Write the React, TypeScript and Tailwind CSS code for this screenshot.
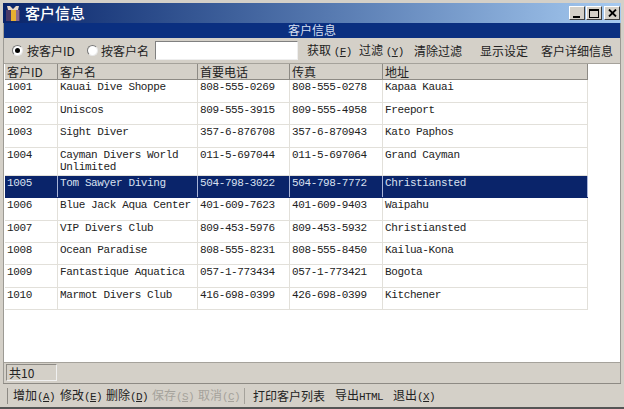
import React from 'react';

const columns = [
    { label: '客户ID', width: 'w-[53px]' },
    { label: '客户名', width: 'w-[140px]' },
    { label: '首要电话', width: 'w-[92px]' },
    { label: '传真', width: 'w-[93px]' },
    { label: '地址', width: 'w-[205px]' },
];

const customers = [
    { id: '1001', name: 'Kauai Dive Shoppe', phone: '808-555-0269', fax: '808-555-0278', addr: 'Kapaa Kauai', h: 'h-[23px]' },
    { id: '1002', name: 'Uniscos', phone: '809-555-3915', fax: '809-555-4958', addr: 'Freeport', h: 'h-[22px]' },
    { id: '1003', name: 'Sight Diver', phone: '357-6-876708', fax: '357-6-870943', addr: 'Kato Paphos', h: 'h-[23px]' },
    { id: '1004', name: 'Cayman Divers World Unlimited', phone: '011-5-697044', fax: '011-5-697064', addr: 'Grand Cayman', h: 'h-[28px]' },
    { id: '1005', name: 'Tom Sawyer Diving', phone: '504-798-3022', fax: '504-798-7772', addr: 'Christiansted', h: 'h-[22px]', selected: true },
    { id: '1006', name: 'Blue Jack Aqua Center', phone: '401-609-7623', fax: '401-609-9403', addr: 'Waipahu', h: 'h-[23px]' },
    { id: '1007', name: 'VIP Divers Club', phone: '809-453-5976', fax: '809-453-5932', addr: 'Christiansted', h: 'h-[22px]' },
    { id: '1008', name: 'Ocean Paradise', phone: '808-555-8231', fax: '808-555-8450', addr: 'Kailua-Kona', h: 'h-[22px]' },
    { id: '1009', name: 'Fantastique Aquatica', phone: '057-1-773434', fax: '057-1-773421', addr: 'Bogota', h: 'h-[23px]' },
    { id: '1010', name: 'Marmot Divers Club', phone: '416-698-0399', fax: '426-698-0399', addr: 'Kitchener', h: 'h-[22px]' },
];

const Radio = ({ checked }: { checked?: boolean }) => (
    <span className="w-[11px] h-[11px] rounded-full bg-white border border-t-[#777] border-l-[#777] border-r-[#e8e8e8] border-b-[#e8e8e8] flex items-center justify-center">
        {checked && <span className="w-[5px] h-[5px] rounded-full bg-black" />}
    </span>
);

const Key = ({ k }: { k: string }) => (
    <span className="font-['Liberation_Mono',monospace] text-[11px] tracking-[-0.6px]">
        (<span className="underline">{k}</span>)
    </span>
);

const WinButton = ({ children }: { children: React.ReactNode }) => (
    <div className="w-[16px] h-[14px] bg-[#d4d0c8] border border-t-white border-l-white border-r-[#404040] border-b-[#404040] flex items-center justify-center">
        {children}
    </div>
);

const Cell = ({ text, width, selected }: { text: string; width: string; selected?: boolean }) => (
    <div className={`${width} shrink-0 h-full pl-[2px] pt-[1px] leading-[12px] border-r ${selected ? 'border-[#a8b4d8]' : 'border-[#e2e0da]'}`}>
        {text}
    </div>
);

const App: React.FC = () => {
    return (
        <div className="w-[624px] h-[409px] overflow-hidden bg-[#d4d0c8] pt-[3px] border-b-2 border-[#555] font-['Liberation_Mono','Noto_Sans_CJK_SC',monospace] text-[11px] tracking-[-0.38px] text-[#222]">
            {/* title bar */}
            <div className="mx-[3px] h-[20px] flex items-center bg-gradient-to-r from-[#0a246a] to-[#a6caf0]">
                <svg width="18" height="18" viewBox="0 0 18 18" className="ml-[1px] shrink-0">
                    <rect x="2" y="6" width="14" height="11" fill="#4a3a68" />
                    <rect x="7" y="6" width="5" height="11" fill="#e8b030" />
                    <rect x="12" y="6" width="3" height="11" fill="#8a6a90" />
                    <path d="M3 2l3 0 3 3 3-3 3 0-1 4H4z" fill="#e8d8c8" />
                </svg>
                <span className="ml-[3px] font-['Noto_Sans_CJK_SC',sans-serif] text-[15px] tracking-normal font-medium text-white">客户信息</span>
                <div className="ml-auto mr-[1px] flex">
                    <WinButton>
                        <span className="w-[7px] h-[2px] bg-black mt-[7px] mr-[1px]" />
                    </WinButton>
                    <div className="w-[1px]" />
                    <WinButton>
                        <span className="w-[10px] h-[9px] border border-black border-t-2" />
                    </WinButton>
                    <div className="w-[2px]" />
                    <WinButton>
                        <svg width="9" height="8" viewBox="0 0 9 8">
                            <path d="M1 0.5L8 7.5M8 0.5L1 7.5" stroke="#000" strokeWidth="1.8" />
                        </svg>
                    </WinButton>
                </div>
            </div>

            <div className="mx-[3px] border-l border-r border-[#9c9a94] h-[360px] flex flex-col">
                {/* caption */}
                <div className="h-[15px] shrink-0 bg-[#0a2f80] text-[#d6dff0] text-center font-['Noto_Sans_CJK_SC',sans-serif] text-[12px] tracking-normal leading-[14px]">
                    客户信息
                </div>

                {/* filter bar */}
                <div className="h-[26px] shrink-0 flex items-center font-['Noto_Sans_CJK_SC','Liberation_Mono',monospace] tracking-normal text-[12px] border-b border-[#a5a29b]">
                    <div className="ml-[8px]"><Radio checked /></div>
                    <span className="ml-[4px] w-[48px] whitespace-nowrap">按客户ID</span>
                    <div className="ml-[12px]"><Radio /></div>
                    <span className="ml-[3px] w-[48px] whitespace-nowrap">按客户名</span>
                    <div className="ml-[6px] w-[143px] h-[19px] bg-white border border-t-[#808080] border-l-[#808080] border-r-[#eee] border-b-[#eee]" />
                    <span className="ml-[9px] w-[44px] whitespace-nowrap">获取 <Key k="F" /></span>
                    <span className="ml-[8px] w-[44px] whitespace-nowrap">过滤 <Key k="Y" /></span>
                    <span className="ml-[11px] whitespace-nowrap">清除过滤</span>
                    <span className="ml-[18px] whitespace-nowrap">显示设定</span>
                    <span className="ml-[13px] whitespace-nowrap">客户详细信息</span>
                </div>

                {/* grid */}
                <div className="flex-1 bg-white pl-[1px] min-h-0">
                    <div className="w-[583px]">
                        <div className="h-[16px] flex bg-[#d4d0c8] border-b border-[#8d8a84] font-['Noto_Sans_CJK_SC','Liberation_Mono',monospace] tracking-normal text-[12px]">
                            {columns.map((col) => (
                                <div key={col.label} className={`${col.width} shrink-0 pl-[2px] leading-[15px] border-r border-[#8d8a84] whitespace-nowrap`}>
                                    {col.label}
                                </div>
                            ))}
                        </div>
                        {customers.map((c) => (
                            <div
                                key={c.id}
                                className={`${c.h} flex border-b ${c.selected ? 'bg-[#0a246a] text-[#d8e0f0] border-[#0a246a]' : 'border-[#e2e0da]'}`}
                            >
                                <Cell text={c.id} width={columns[0].width} selected={c.selected} />
                                <Cell text={c.name} width={columns[1].width} selected={c.selected} />
                                <Cell text={c.phone} width={columns[2].width} selected={c.selected} />
                                <Cell text={c.fax} width={columns[3].width} selected={c.selected} />
                                <Cell text={c.addr} width={columns[4].width} selected={c.selected} />
                            </div>
                        ))}
                    </div>
                </div>

                {/* count */}
                <div className="h-[21px] shrink-0 border-t border-[#a5a29b] pl-[2px] pt-[1px]">
                    <div className="w-[51px] h-[17px] pl-[2px] leading-[15px] border border-t-[#8d8a84] border-l-[#8d8a84] border-r-[#f0f0f0] border-b-[#f0f0f0] font-['Noto_Sans_CJK_SC','Liberation_Mono',monospace] tracking-normal text-[12px]">
                        共10
                    </div>
                </div>
            </div>

            {/* bottom toolbar */}
            <div className="h-[24px] mx-[3px] pl-[4px] flex items-center border-t border-[#8d8a84] font-['Noto_Sans_CJK_SC','Liberation_Mono',monospace] tracking-normal text-[12px] whitespace-nowrap">
                <div className="w-[1px] h-[16px] bg-[#8d8a84] mr-[5px]" />
                <span className="w-[46px]">增加<Key k="A" /></span>
                <span className="w-[46px] ml-[1px]">修改<Key k="E" /></span>
                <span className="w-[46px]">删除<Key k="D" /></span>
                <span className="w-[46px] text-[#a5a29b]">保存<Key k="S" /></span>
                <span className="w-[46px] text-[#a5a29b]">取消<Key k="C" /></span>
                <div className="w-[1px] h-[16px] bg-[#a5a29b] mr-[8px]" />
                <span>打印客户列表</span>
                <span className="ml-[10px] w-[48px]">导出<span className="font-['Liberation_Mono',monospace] text-[11px] tracking-[-0.6px]">HTML</span></span>
                <span className="ml-[10px]">退出<Key k="X" /></span>
            </div>
        </div>
    );
};

export default App;
